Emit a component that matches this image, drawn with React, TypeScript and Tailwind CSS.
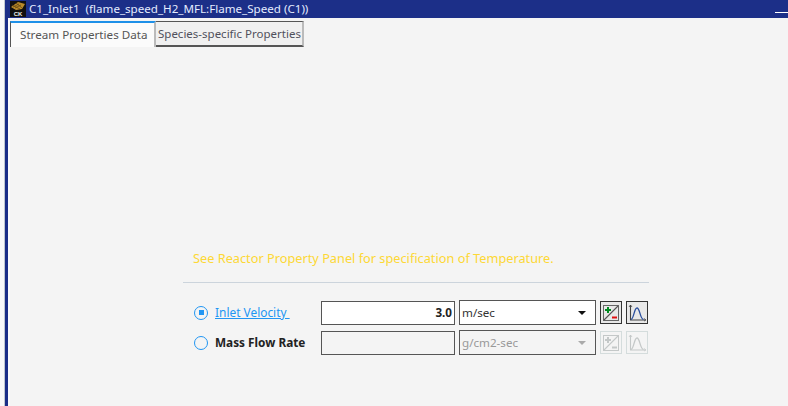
import React from 'react';

const font = { fontFamily: '"Noto Sans", sans-serif' };

const SensitivityIcon = ({ disabled }: { disabled?: boolean }) => (
  <svg width="18" height="18" viewBox="0 0 18 18" fill="none">
    <rect x="1.5" y="1.5" width="15" height="15" stroke={disabled ? '#c4c8c8' : '#666'} fill={disabled ? 'none' : '#e8e8e8'} />
    <path d="M2 16 16 2" stroke={disabled ? '#c4c8c8' : '#555'} strokeWidth="1.1" />
    <path d="M3 6h6M6 3v6" stroke={disabled ? '#c4c8c8' : '#008a20'} strokeWidth="2" />
    <path d="M10 13.5h5" stroke={disabled ? '#c4c8c8' : '#e01010'} strokeWidth="2" />
  </svg>
);

const ProfileIcon = ({ disabled }: { disabled?: boolean }) => (
  <svg width="20" height="18" viewBox="0 0 20 18" fill="none">
    <path d="M3.5 1v15h15" stroke={disabled ? '#c4c8c8' : '#444'} strokeWidth="1.1" />
    <path d="M2 3l1.5-2L5 3M17 14.5l2 1.5-2 1" stroke={disabled ? '#c4c8c8' : '#444'} strokeWidth="0.8" />
    <path d="M4 15.5C7 15 7 4 10 4s3 11 6.5 11.5" stroke={disabled ? '#c4c8c8' : '#2b4f9e'} strokeWidth="1.3" />
  </svg>
);

const Logo = () => (
  <svg width="16" height="16" viewBox="0 0 16 16">
    <rect width="16" height="16" fill="#111" />
    <path d="M1 6 8 1l7 2-3 5-6 1z" fill="#b98a2a" />
    <path d="M3 6 9 3M5 7l6-3M2 4l8 4M6 2l6 5" stroke="#5a4010" strokeWidth="0.7" />
    <text x="8" y="15" textAnchor="middle" fontSize="6" fontWeight="700" fill="#eee" fontFamily="Liberation Sans, sans-serif">CK</text>
  </svg>
);

export default function App() {
  return (
    <div className="w-[788px] h-[406px] flex overflow-hidden bg-[#f4f4f4] text-[11.65px]" style={font}>
      <div className="w-[8px] shrink-0 flex">
        <div className="w-[5px] h-full bg-[#fafafa] border-r border-r-[#c0c8d0]" />
        <div className="w-[3px] h-full bg-[#1c2f88]" />
      </div>
      <div className="flex-1 flex flex-col">
        <div className="h-[18px] shrink-0 bg-[#1c2f88] flex items-center pl-[2px]">
          <Logo />
          <span className="ml-[3px] text-[11.6px] leading-[18px] whitespace-pre text-[#e4ecff]">C1_Inlet1  (flame_speed_H2_MFL:Flame_Speed (C1))</span>
          <div className="ml-auto self-end mb-[5px] w-[13px] h-[1px] bg-white" />
        </div>
        <div className="flex-1 flex flex-col border-l-2 border-l-[#fbfbfb]">
          <div className="h-[29px] shrink-0 flex items-start pt-[3px]">
            <div className="h-[26px] w-[146px] bg-[#fbfbfb] border-t-2 border-t-[#1e90e8] border-l border-l-[#555] border-r-2 border-r-[#bbb] flex items-center pl-[9px] text-[#555] whitespace-nowrap">
              Stream Properties Data
            </div>
            <div className="h-[26px] w-[148px] bg-[#f0f0f0] border-t border-t-[#555] border-b-2 border-b-[#555] border-r-2 border-r-[#bbb] flex items-center pl-[2px] text-[11.5px] text-[#50505c] whitespace-nowrap">
              Species-specific Properties
            </div>
          </div>
          <div className="flex-1 flex flex-col pl-[173px] pt-[202px]">
            <p className="text-[#fdd835] text-[12.75px] leading-[18px] pl-[10px]">See Reactor Property Panel for specification of Temperature.</p>
            <div className="mt-[15px] h-[1px] bg-[#ccd4dc] w-[466px] shrink-0" />
            <div className="mt-[17px] flex items-center h-[25px] w-[466px] pl-[11px]">
              <span className="w-[14px] h-[14px] rounded-full border border-[#2196f3] flex items-center justify-center">
                <span className="w-[5px] h-[5px] bg-[#2196f3]" />
              </span>
              <a className="ml-[7px] w-[106px] text-[#2196f3] underline whitespace-pre text-[11.9px]">Inlet Velocity </a>
              <div className="w-[134px] h-[24px] bg-white border border-[#555] flex items-center justify-end pr-[2px] font-bold text-[#222]">3.0</div>
              <div className="ml-[4px] w-[137px] h-[25px] bg-white border border-[#555] flex items-center justify-between pl-[2px] pr-[9px] text-[#333]">
                m/sec
                <span className="w-0 h-0 border-l-[4px] border-r-[4px] border-t-[4px] border-l-transparent border-r-transparent border-t-[#111]" />
              </div>
              <div className="ml-[4px] w-[22px] h-[23px] bg-[#e8e8e8] border border-[#333] flex items-center justify-center"><SensitivityIcon /></div>
              <div className="ml-[4px] w-[22px] h-[23px] bg-[#e8e8e8] border border-[#333] flex items-center justify-center"><ProfileIcon /></div>
            </div>
            <div className="mt-[5px] flex items-center h-[25px] w-[466px] pl-[11px]">
              <span className="w-[14px] h-[14px] rounded-full border border-[#2196f3]" />
              <span className="ml-[7px] w-[106px] font-bold text-[11.8px] text-[#222]">Mass Flow Rate</span>
              <div className="w-[134px] h-[24px] bg-[#f4f4f4] border border-[#555]" />
              <div className="ml-[4px] w-[137px] h-[25px] bg-[#f4f4f4] border border-[#555] flex items-center justify-between pl-[2px] pr-[9px] text-[#999]">
                g/cm2-sec
                <span className="w-0 h-0 border-l-[4px] border-r-[4px] border-t-[4px] border-l-transparent border-r-transparent border-t-[#aaa]" />
              </div>
              <div className="ml-[4px] w-[22px] h-[23px] border border-[#d4dcdc] flex items-center justify-center"><SensitivityIcon disabled /></div>
              <div className="ml-[4px] w-[22px] h-[23px] border border-[#d4dcdc] flex items-center justify-center"><ProfileIcon disabled /></div>
            </div>
          </div>
        </div>
      </div>
    </div>
  );
}
